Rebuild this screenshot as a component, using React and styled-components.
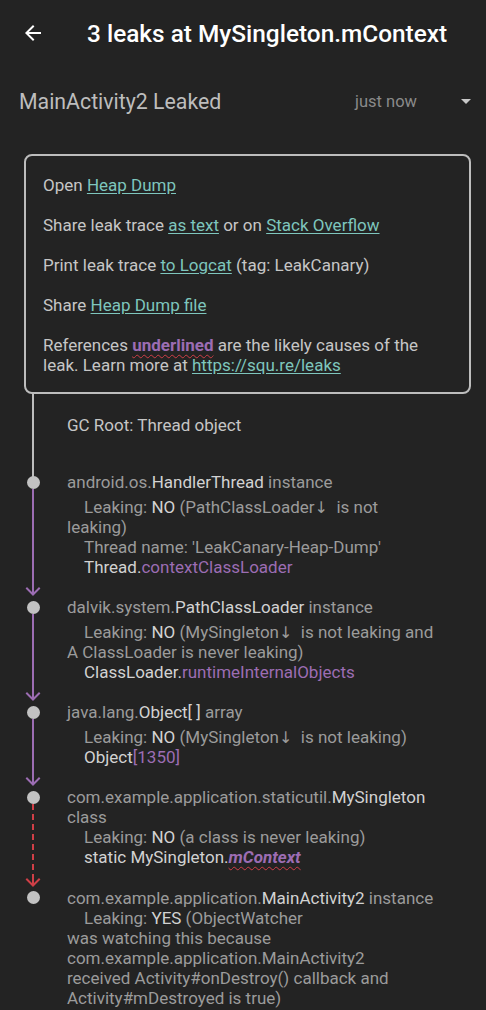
import React from 'react';
import styled, { createGlobalStyle } from 'styled-components';

const GlobalStyle = createGlobalStyle`
  html, body {
    margin: 0;
    padding: 0;
    background: #232323;
  }
  body {
    font-family: Roboto, 'Noto Sans', sans-serif;
    overflow: hidden;
  }
`;

const Page = styled.div`
  width: 486px;
  min-height: 1010px;
  background: #232323;
  color: #c6c6c6;
`;

const Toolbar = styled.header`
  height: 66px;
  display: flex;
  align-items: center;
  padding-left: 21px;
`;

const BackButton = styled.svg`
  width: 24px;
  height: 24px;
  fill: #ffffff;
  flex-shrink: 0;
`;

const Title = styled.h1`
  margin: 0 0 0 42px;
  font-size: 24.4px;
  font-weight: 500;
  color: #ffffff;
  white-space: nowrap;
`;

const HeaderRow = styled.div`
  height: 70px;
  display: flex;
  align-items: center;
  padding: 0 8px 0 19px;
`;

const LeakName = styled.div`
  flex: 1;
  font-size: 21.3px;
  color: #bdbdbd;
`;

const Time = styled.span`
  font-size: 16.5px;
  color: #8a8a8a;
`;

const DropIcon = styled.svg`
  width: 24px;
  height: 24px;
  margin-left: 37px;
  fill: #c8c8c8;
`;

const Card = styled.section`
  margin: 18px 15px 0 24px;
  border: 2px solid #bdbdbd;
  border-radius: 8px;
  padding: 19px 12px 17px 17px;
  display: flex;
  flex-direction: column;
  gap: 20px;
  font-size: 17px;
  line-height: 20px;
  color: #c6c6c6;
`;

const CardLine = styled.p`
  margin: 0;
  white-space: nowrap;
`;

const Link = styled.a`
  color: #7ec6bd;
  text-decoration: underline;
  text-underline-offset: 2px;
  cursor: pointer;
`;

const Culprit = styled.span`
  color: #9c6db3;
  font-weight: 700;
  font-style: ${(p) => (p.$italic ? 'italic' : 'normal')};
  text-decoration: underline wavy #cf3f47;
  text-decoration-thickness: 1px;
  text-underline-offset: 3px;
`;

const Trace = styled.div`
  display: flex;
  flex-direction: column;
  font-size: 17px;
  line-height: 20px;
`;

const Row = styled.div`
  display: grid;
  grid-template-columns: 66px 1fr;
  column-gap: 1px;
`;

const Gutter = styled.div`
  display: flex;
  flex-direction: column;
  align-items: center;
  margin-bottom: ${(p) => p.$bottom || '0'};
`;

const Dot = styled.div`
  width: 13px;
  height: 13px;
  margin-top: 3.5px;
  border-radius: 50%;
  background: #c2c2c2;
  flex-shrink: 0;
`;

const Rail = styled.div`
  flex: 1;
  width: 2px;
  background: ${(p) =>
    p.$dashed
      ? `repeating-linear-gradient(to bottom, ${p.$color} 0 6px, transparent 6px 10px)`
      : p.$color};
`;

const Connector = styled.div`
  flex: 1;
  display: flex;
  flex-direction: column;
  align-items: center;
  margin-bottom: 1px;
`;

const Head = styled.svg`
  width: 16px;
  height: 9px;
  flex-shrink: 0;
  fill: none;
  stroke-width: 2;
  stroke-linecap: square;
`;

const NodeText = styled.div`
  padding: ${(p) => p.$pad || '0 8px 20.5px 0'};
  white-space: nowrap;
`;

const Line = styled.div`
  text-indent: ${(p) => (p.$indent ? '17px' : '0')};
  margin-top: ${(p) => (p.$tall ? '4.5px' : '0')};
  color: #9b9b9b;
`;

const DownArrow = styled.span`
  font-family: 'DejaVu Sans', sans-serif;
  font-size: 16px;
  line-height: 0;
`;

const RootLabel = styled(NodeText)`
  color: #c6c6c6;
`;

const Strong = styled.span`
  color: #d2d2d2;
`;

const Field = styled.span`
  color: #9c6db3;
`;

const Arrow = ({ color, dashed }) => (
  <Connector>
    <Rail $color={color} $dashed={dashed} />
    <Head viewBox="0 0 16 9" stroke={color}>
      <polyline points="2,1.5 8,7.5 14,1.5" />
      <line x1="8" y1="0" x2="8" y2="7.5" strokeLinecap="butt" />
    </Head>
  </Connector>
);

const PURPLE = '#9c6db3';
const RED = '#cf3f47';

const Node = ({ children, dashed, last }) => (
  <Row>
    <Gutter>
      <Dot />
      {!last && <Arrow color={dashed ? RED : PURPLE} dashed={dashed} />}
    </Gutter>
    <NodeText $pad={last ? '0 8px 0 0' : undefined}>{children}</NodeText>
  </Row>
);

const App = () => (
  <Page>
    <GlobalStyle />
    <Toolbar>
      <BackButton viewBox="0 0 24 24">
        <path d="M20 11H7.83l5.59-5.59L12 4l-8 8 8 8 1.41-1.41L7.83 13H20v-2z" />
      </BackButton>
      <Title>3 leaks at MySingleton.mContext</Title>
    </Toolbar>

    <HeaderRow>
      <LeakName>MainActivity2 Leaked</LeakName>
      <Time>just now</Time>
      <DropIcon viewBox="0 0 24 24">
        <path d="M7 10l5 5 5-5z" />
      </DropIcon>
    </HeaderRow>

    <Card>
      <CardLine>
        Open <Link>Heap Dump</Link>
      </CardLine>
      <CardLine>
        Share leak trace <Link>as text</Link> or on <Link>Stack Overflow</Link>
      </CardLine>
      <CardLine>
        Print leak trace <Link>to Logcat</Link> (tag: LeakCanary)
      </CardLine>
      <CardLine>
        Share <Link>Heap Dump file</Link>
      </CardLine>
      <CardLine>
        References <Culprit>underlined</Culprit> are the likely causes of the
        <br />
        leak. Learn more at <Link>https://squ.re/leaks</Link>
      </CardLine>
    </Card>

    <Trace>
      <Row>
        <Gutter $bottom="-5px">
          <Rail $color="#bdbdbd" />
        </Gutter>
        <RootLabel $pad="21px 8px 37px 0">GC Root: Thread object</RootLabel>
      </Row>

      <Node>
        <Line>
          android.os.<Strong>HandlerThread</Strong> instance
        </Line>
        <Line $indent $tall>
          Leaking: <Strong>NO</Strong> (PathClassLoader<DownArrow>↓</DownArrow>&nbsp; is not
          <br />
          leaking)
        </Line>
        <Line $indent>Thread name: 'LeakCanary-Heap-Dump'</Line>
        <Line $indent>
          <Strong>Thread.</Strong>
          <Field>contextClassLoader</Field>
        </Line>
      </Node>

      <Node>
        <Line>
          dalvik.system.<Strong>PathClassLoader</Strong> instance
        </Line>
        <Line $indent $tall>
          Leaking: <Strong>NO</Strong> (MySingleton<DownArrow>↓</DownArrow>&nbsp; is not leaking and
          <br />
          A ClassLoader is never leaking)
        </Line>
        <Line $indent>
          <Strong>ClassLoader.</Strong>
          <Field>runtimeInternalObjects</Field>
        </Line>
      </Node>

      <Node>
        <Line>
          java.lang.<Strong>Object[ ]</Strong> array
        </Line>
        <Line $indent $tall>
          Leaking: <Strong>NO</Strong> (MySingleton<DownArrow>↓</DownArrow>&nbsp; is not leaking)
        </Line>
        <Line $indent>
          <Strong>Object</Strong>
          <Field>[1350]</Field>
        </Line>
      </Node>

      <Node dashed>
        <Line>
          com.example.application.staticutil.<Strong>MySingleton</Strong>
          <br />
          class
        </Line>
        <Line $indent>
          Leaking: <Strong>NO</Strong> (a class is never leaking)
        </Line>
        <Line $indent>
          <Strong>static MySingleton.</Strong>
          <Culprit $italic>mContext</Culprit>
        </Line>
      </Node>

      <Node last>
        <Line>
          com.example.application.<Strong>MainActivity2</Strong> instance
        </Line>
        <Line $indent>
          Leaking: <Strong>YES</Strong> (ObjectWatcher
          <br />
          was watching this because
          <br />
          com.example.application.MainActivity2
          <br />
          received Activity#onDestroy() callback and
          <br />
          Activity#mDestroyed is true)
        </Line>
      </Node>
    </Trace>
  </Page>
);

export default App;
